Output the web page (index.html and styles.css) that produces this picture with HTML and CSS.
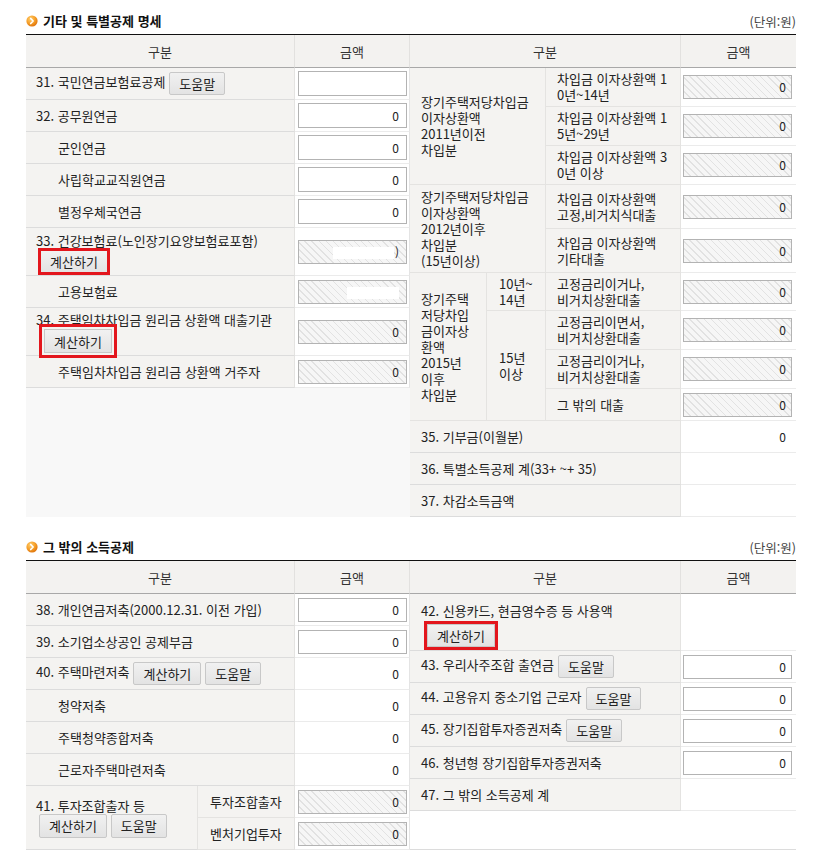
FILE: index.html
```html
<!DOCTYPE html>
<html lang="ko">
<head>
<meta charset="utf-8">
<title>기타 및 특별공제 명세</title>
<link rel="stylesheet" href="styles.css">
</head>
<body>
<div class="page">

  <section class="block">
    <div class="block-head">
      <h2 class="block-title">
        <svg class="bullet" viewBox="0 0 12 12" width="12" height="12" aria-hidden="true">
          <defs><radialGradient id="bg1" cx="38%" cy="32%" r="72%"><stop offset="0" stop-color="#ffcf70"/><stop offset="0.55" stop-color="#f6a02a"/><stop offset="1" stop-color="#dd7008"/></radialGradient></defs>
          <circle cx="6" cy="6" r="5.6" fill="url(#bg1)"/>
          <path d="M4.7 3.5 L7.1 6 L4.7 8.5" fill="none" stroke="#fff" stroke-width="1.7" stroke-linecap="round" stroke-linejoin="round"/>
        </svg>
        기타 및 특별공제 명세
      </h2>
      <span class="unit">(단위:원)</span>
    </div>

    <div class="tables">
      <div class="half half--left half--grey">
        <table class="grid">
          <colgroup><col class="c269"><col class="c115"></colgroup>
          <thead>
            <tr class="r-head"><th>구분</th><th class="sep">금액</th></tr>
          </thead>
          <tbody>
            <tr class="h32"><td class="lbl">31. 국민연금보험료공제<button class="btn">도움말</button></td><td class="amt amt--l"><div class="box box--tall"></div></td></tr>
            <tr class="h32"><td class="lbl">32. 공무원연금</td><td class="amt amt--l"><div class="box box--tall">0</div></td></tr>
            <tr class="h32"><td class="lbl ind">군인연금</td><td class="amt amt--l"><div class="box box--tall">0</div></td></tr>
            <tr class="h32"><td class="lbl ind">사립학교교직원연금</td><td class="amt amt--l"><div class="box box--tall">0</div></td></tr>
            <tr class="h32"><td class="lbl ind">별정우체국연금</td><td class="amt amt--l"><div class="box box--tall">0</div></td></tr>
            <tr class="h48"><td class="lbl top top--5">33. 건강보험료(노인장기요양보험료포함)<div class="btn-row"><button class="btn btn--mark">계산하기</button></div></td><td class="amt amt--l"><div class="box box--hatch"><span class="redact redact--a"></span>)</div></td></tr>
            <tr class="h32"><td class="lbl ind">고용보험료</td><td class="amt amt--l"><div class="box box--hatch"><span class="redact redact--b"></span></div></td></tr>
            <tr class="h48"><td class="lbl top top--4">34. 주택임차차입금 원리금 상환액 대출기관<div class="btn-row btn-row--34"><button class="btn btn--mark btn--mark-out">계산하기</button></div></td><td class="amt amt--l"><div class="box box--hatch">0</div></td></tr>
            <tr class="h32"><td class="lbl ind">주택임차차입금 원리금 상환액 거주자</td><td class="amt amt--l"><div class="box box--hatch">0</div></td></tr>
          </tbody>
        </table>
      </div>

      <div class="half half--right">
        <table class="grid">
          <colgroup><col class="c77"><col class="c59"><col class="c135"><col class="c115"></colgroup>
          <thead>
            <tr class="r-head"><th colspan="3">구분</th><th class="last">금액</th></tr>
          </thead>
          <tbody>
            <tr class="h39">
              <td class="lbl grp" rowspan="3" colspan="2">장기주택저당차입금<br>이자상환액<br>2011년이전<br>차입분</td>
              <td class="lbl item">차입금 이자상환액 1<br>0년~14년</td>
              <td class="amt amt--r"><div class="box box--hatch box--r">0</div></td>
            </tr>
            <tr class="h39">
              <td class="lbl item">차입금 이자상환액 1<br>5년~29년</td>
              <td class="amt amt--r"><div class="box box--hatch box--r">0</div></td>
            </tr>
            <tr class="h39">
              <td class="lbl item">차입금 이자상환액 3<br>0년 이상</td>
              <td class="amt amt--r"><div class="box box--hatch box--r">0</div></td>
            </tr>
            <tr class="h44">
              <td class="lbl grp" rowspan="2" colspan="2">장기주택저당차입금<br>이자상환액<br>2012년이후<br>차입분<br>(15년이상)</td>
              <td class="lbl item">차입금 이자상환액<br>고정,비거치식대출</td>
              <td class="amt amt--r"><div class="box box--hatch box--r">0</div></td>
            </tr>
            <tr class="h44">
              <td class="lbl item">차입금 이자상환액<br>기타대출</td>
              <td class="amt amt--r"><div class="box box--hatch box--r">0</div></td>
            </tr>
            <tr class="h38">
              <td class="lbl grp" rowspan="4">장기주택<br>저당차입<br>금이자상<br>환액<br>2015년<br>이후<br>차입분</td>
              <td class="lbl sub">10년~<br>14년</td>
              <td class="lbl item">고정금리이거나,<br>비거치상환대출</td>
              <td class="amt amt--r"><div class="box box--hatch box--r">0</div></td>
            </tr>
            <tr class="h39">
              <td class="lbl sub" rowspan="3">15년<br>이상</td>
              <td class="lbl item">고정금리이면서,<br>비거치상환대출</td>
              <td class="amt amt--r"><div class="box box--hatch box--r">0</div></td>
            </tr>
            <tr class="h39">
              <td class="lbl item">고정금리이거나,<br>비거치상환대출</td>
              <td class="amt amt--r"><div class="box box--hatch box--r">0</div></td>
            </tr>
            <tr class="h32">
              <td class="lbl item">그 밖의 대출</td>
              <td class="amt amt--r"><div class="box box--hatch box--r">0</div></td>
            </tr>
            <tr class="h32"><td class="lbl row-r" colspan="3">35. 기부금(이월분)</td><td class="amt num">0</td></tr>
            <tr class="h32"><td class="lbl row-r" colspan="3">36. 특별소득공제 계(33+ ~+ 35)</td><td class="amt num"></td></tr>
            <tr class="h32"><td class="lbl row-r" colspan="3">37. 차감소득금액</td><td class="amt num"></td></tr>
          </tbody>
        </table>
      </div>
    </div>
  </section>

  <section class="block block--second">
    <div class="block-head">
      <h2 class="block-title">
        <svg class="bullet" viewBox="0 0 12 12" width="12" height="12" aria-hidden="true">
          <defs><radialGradient id="bg2" cx="38%" cy="32%" r="72%"><stop offset="0" stop-color="#ffcf70"/><stop offset="0.55" stop-color="#f6a02a"/><stop offset="1" stop-color="#dd7008"/></radialGradient></defs>
          <circle cx="6" cy="6" r="5.6" fill="url(#bg2)"/>
          <path d="M4.7 3.5 L7.1 6 L4.7 8.5" fill="none" stroke="#fff" stroke-width="1.7" stroke-linecap="round" stroke-linejoin="round"/>
        </svg>
        그 밖의 소득공제
      </h2>
      <span class="unit">(단위:원)</span>
    </div>

    <div class="tables">
      <div class="half half--left">
        <table class="grid">
          <colgroup><col class="c172"><col class="c97"><col class="c115"></colgroup>
          <thead>
            <tr class="r-head"><th colspan="2">구분</th><th class="sep">금액</th></tr>
          </thead>
          <tbody>
            <tr class="h32"><td class="lbl" colspan="2">38. 개인연금저축(2000.12.31. 이전 가입)</td><td class="amt amt--l"><div class="box">0</div></td></tr>
            <tr class="h32"><td class="lbl" colspan="2">39. 소기업소상공인 공제부금</td><td class="amt amt--l"><div class="box">0</div></td></tr>
            <tr class="h32"><td class="lbl" colspan="2">40. 주택마련저축<button class="btn">계산하기</button><button class="btn">도움말</button></td><td class="amt num num--l">0</td></tr>
            <tr class="h32"><td class="lbl ind" colspan="2">청약저축</td><td class="amt num num--l">0</td></tr>
            <tr class="h32"><td class="lbl ind" colspan="2">주택청약종합저축</td><td class="amt num num--l">0</td></tr>
            <tr class="h32"><td class="lbl ind" colspan="2">근로자주택마련저축</td><td class="amt num num--l">0</td></tr>
            <tr class="h32">
              <td class="lbl grp41" rowspan="2">41. 투자조합출자 등<div class="btn-row btn-row--41"><button class="btn">계산하기</button><button class="btn">도움말</button></div></td>
              <td class="lbl sub41">투자조합출자</td>
              <td class="amt amt--l"><div class="box box--hatch">0</div></td>
            </tr>
            <tr class="h32">
              <td class="lbl sub41">벤처기업투자</td>
              <td class="amt amt--l"><div class="box box--hatch">0</div></td>
            </tr>
          </tbody>
        </table>
      </div>

      <div class="half half--right half--bottom">
        <table class="grid">
          <colgroup><col class="c271"><col class="c115"></colgroup>
          <thead>
            <tr class="r-head"><th>구분</th><th class="last">금액</th></tr>
          </thead>
          <tbody>
            <tr class="h57"><td class="lbl row-r top top--9">42. 신용카드, 현금영수증 등 사용액<div class="btn-row btn-row--42"><button class="btn btn--mark btn--mark-0">계산하기</button></div></td><td class="amt"></td></tr>
            <tr class="h32"><td class="lbl row-r">43. 우리사주조합 출연금<button class="btn">도움말</button></td><td class="amt amt--r"><div class="box box--r">0</div></td></tr>
            <tr class="h32"><td class="lbl row-r">44. 고용유지 중소기업 근로자<button class="btn">도움말</button></td><td class="amt amt--r"><div class="box box--r">0</div></td></tr>
            <tr class="h32"><td class="lbl row-r">45. 장기집합투자증권저축<button class="btn">도움말</button></td><td class="amt amt--r"><div class="box box--r">0</div></td></tr>
            <tr class="h32"><td class="lbl row-r">46. 청년형 장기집합투자증권저축</td><td class="amt amt--r"><div class="box box--r">0</div></td></tr>
            <tr class="h32"><td class="lbl row-r">47. 그 밖의 소득공제 계</td><td class="amt"></td></tr>
          </tbody>
        </table>
      </div>
    </div>
  </section>

</div>
</body>
</html>
```

FILE: styles.css
```css
* { box-sizing: border-box; }

html, body { margin: 0; padding: 0; background: #fff; }

body {
  font-family: "Noto Sans CJK KR", "Noto Sans", "Liberation Sans", sans-serif;
  font-size: 13px;
  color: #222;
}

.page {
  padding: 11px 0 0 26px;
}

.block--second { margin-top: 20px; }

.block-head {
  width: 770px;
  height: 23px;
  display: flex;
  justify-content: space-between;
  align-items: flex-start;
}

.block-title {
  margin: 0;
  display: flex;
  align-items: center;
  gap: 5px;
  font-size: 13px;
  font-weight: 700;
  line-height: 20px;
  color: #111;
}

.bullet { display: block; flex: none; }

.unit {
  font-size: 12.5px;
  line-height: 22px;
  color: #444;
}

.tables {
  width: 770px;
  display: flex;
  align-items: stretch;
  border-top: 1px solid #111;
}

.half { display: flex; flex-direction: column; }
.half--left { width: 384px; }
.half--right { width: 386px; }
.half--grey { background: #f8f8f8; }
.half--bottom { border-bottom: 1px solid #dcdcdc; }

table.grid {
  width: 100%;
  border-collapse: separate;
  border-spacing: 0;
  table-layout: fixed;
}

.c269 { width: 269px; }
.c115 { width: 115px; }
.c77 { width: 77px; }
.c59 { width: 59px; }
.c135 { width: 135px; }
.c172 { width: 172px; }
.c97 { width: 97px; }
.c271 { width: 271px; }

.r-head { height: 33px; }
.h32 { height: 32px; }
.h38 { height: 38px; }
.h39 { height: 39px; }
.h44 { height: 44px; }
.h48 { height: 48px; }
.h57 { height: 57px; }

th {
  padding: 0;
  background: #f3f2f0;
  font-weight: 400;
  font-size: 13px;
  color: #333;
  text-align: center;
  border-bottom: 1px solid #a8a8a8;
  border-right: 1px solid #e2e1df;
}
th.last { border-right: 0; }

td {
  padding: 0;
  vertical-align: middle;
  border-bottom: 1px solid #dcdcdc;
}

td.lbl {
  background: #f4f3f1;
  padding-left: 10px;
  padding-right: 2px;
  line-height: 16px;
  color: #222;
  border-right: 1px solid #e4e3e1;
  white-space: nowrap;
}

td.ind { padding-left: 32px; }
td.row-r { padding-left: 11px; }

td.top { vertical-align: top; }
td.top--4 { padding-top: 4px; }
td.top--5 { padding-top: 5px; }
td.top--9 { padding-top: 9px; }

td.grp {
  padding-left: 11px;
  border-bottom-color: #e4e3e1;
}
td.sub {
  padding-left: 12px;
  border-bottom-color: #e4e3e1;
}
td.item {
  padding-left: 11px;
  border-bottom-color: #e4e3e1;
}

td.grp41 { padding-left: 10px; }
td.sub41 { padding-left: 12px; border-bottom-color: #e4e3e1; }

td.amt {
  background: #fff;
  border-bottom-color: #ebebeb;
}
td.amt--l {
  padding: 0 2px 0 3px;
  border-right: 1px solid #e4e4e4;
}
td.amt--r { padding: 0 4px 0 2px; }

td.num {
  text-align: right;
  padding-right: 10px;
  font-size: 12px;
  color: #222;
}
td.num--l {
  padding-right: 10px;
  border-right: 1px solid #e4e4e4;
}

.box {
  height: 24px;
  border: 1px solid #b3b3b3;
  background: #fff;
  text-align: right;
  padding-right: 7px;
  line-height: 22px;
  font-size: 12px;
  color: #222;
}
.box--tall { height: 25px; line-height: 23px; }
.box--r { padding-right: 5px; }
.box--hatch {
  background-color: #f5f5f5;
  background-image: repeating-linear-gradient(45deg, #f6f6f6 0 4px, #e2e2e2 4px 5px);
}

.redact {
  display: inline-block;
  height: 12px;
  background: #fff;
  vertical-align: middle;
}
.redact--a { width: 61px; margin-right: 1px; }
.redact--b { width: 52px; }

.btn {
  height: 23px;
  margin-left: 4px;
  padding: 0 9px;
  border: 1px solid #c8c8c8;
  border-radius: 2px;
  background: linear-gradient(#f1f1f1, #e3e3e3);
  font-family: inherit;
  font-size: 13px;
  line-height: 21px;
  color: #222;
  vertical-align: middle;
  cursor: pointer;
}

.btn-row { margin-top: 1px; line-height: 0; }
.btn-row .btn { margin-left: 4px; }
.btn-row--34 .btn { margin-left: 8px; height: 24px; }
.btn-row--42 { margin-top: 5px; }
.btn-row--42 .btn { margin-left: 6px; }
.btn-row--41 { margin-top: 0; }
.btn-row--41 .btn { height: 24px; margin-left: 0; margin-right: 4px; }
.btn-row--41 .btn:first-child { margin-left: 3px; }

.btn--mark {
  border-radius: 0;
  outline: 3px solid #e3161d;
  outline-offset: -1px;
}
.btn--mark-out { outline-offset: 2px; }
.btn--mark-0 { outline-offset: 0; }
```
